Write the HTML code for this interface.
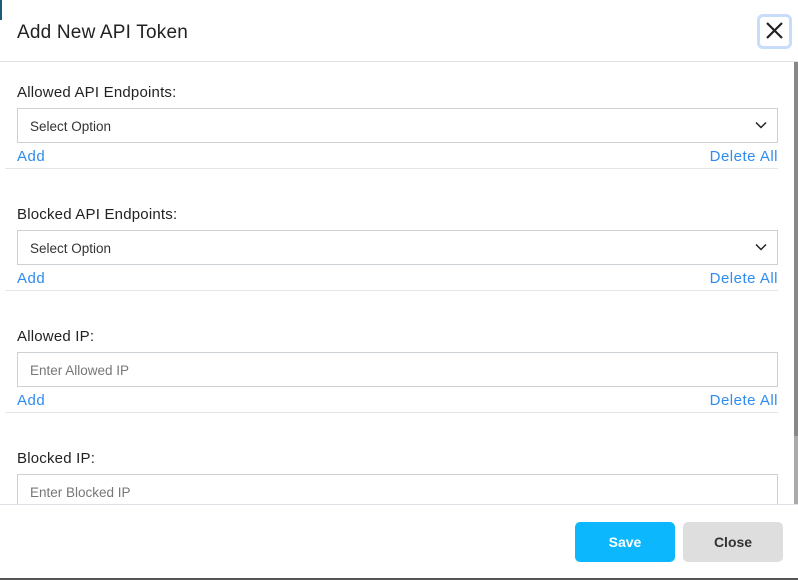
<!DOCTYPE html>
<html><head><style>
*{box-sizing:border-box;margin:0;padding:0}
body{width:798px;height:580px;overflow:hidden;background:#fff;font-family:"Liberation Sans",sans-serif;position:relative}
.hdr{position:absolute;left:0;top:0;width:798px;height:62px;border-bottom:1px solid #dde1e6}
.hdr h1{position:absolute;left:17px;top:22px;font-size:19px;font-weight:normal;color:#222;letter-spacing:0.2px}
.x{position:absolute;left:757px;top:14px;width:35px;height:35px;border:3px solid #c8dcfb;border-radius:6px}
.lbl{position:absolute;left:17px;font-size:15px;color:#222;letter-spacing:0.2px}
.inp{position:absolute;left:17px;width:761px;height:35px;border:1px solid #ccd1d6;font-size:13.5px;padding:10px 12px;color:#333}
.ph{color:#777}
.lnk{position:absolute;font-size:15px;color:#2e8cf0;letter-spacing:0.5px}
.sep{position:absolute;left:5px;width:773px;height:1px;background:#e3e5e8}
.foot{position:absolute;left:0;top:504px;width:798px;height:76px;border-top:1px solid #dde1e6;background:#fff}
.btn{position:absolute;top:522px;height:40px;border-radius:5px;font-weight:bold;font-size:14px;text-align:center;line-height:40px}
</style></head><body>
<div style="position:absolute;left:0;top:0;width:2px;height:20px;background:#1a5c7a"></div>
<div class="hdr"><h1>Add New API Token</h1>
<div class="x"><svg width="29" height="29" viewBox="0 0 29 29"><path d="M7 6L22 21M22 6L7 21" stroke="#222" stroke-width="2.2"/></svg></div></div>

<div class="lbl" style="top:84px">Allowed API Endpoints:</div>
<div class="inp" style="top:108px">Select Option<svg style="position:absolute;right:10px;top:12px" width="12" height="8"><path d="M1 1.5L6 6.5L11 1.5" stroke="#222" stroke-width="1.5" fill="none"/></svg></div>
<div class="lnk" style="left:17px;top:148px">Add</div><div class="lnk" style="right:20px;top:148px">Delete All</div>
<div class="sep" style="top:168px"></div>

<div class="lbl" style="top:206px">Blocked API Endpoints:</div>
<div class="inp" style="top:230px">Select Option<svg style="position:absolute;right:10px;top:12px" width="12" height="8"><path d="M1 1.5L6 6.5L11 1.5" stroke="#222" stroke-width="1.5" fill="none"/></svg></div>
<div class="lnk" style="left:17px;top:270px">Add</div><div class="lnk" style="right:20px;top:270px">Delete All</div>
<div class="sep" style="top:290px"></div>

<div class="lbl" style="top:328px">Allowed IP:</div>
<div class="inp" style="top:352px"><span class="ph">Enter Allowed IP</span></div>
<div class="lnk" style="left:17px;top:392px">Add</div><div class="lnk" style="right:20px;top:392px">Delete All</div>
<div class="sep" style="top:412px"></div>

<div class="lbl" style="top:450px">Blocked IP:</div>
<div class="inp" style="top:474px;height:40px"><span class="ph">Enter Blocked IP</span></div>

<div style="position:absolute;left:794px;top:62px;width:4px;height:374px;background:#888"></div>
<div style="position:absolute;left:794px;top:436px;width:4px;height:68px;background:#aaa"></div>

<div class="foot"></div>
<div class="btn" style="left:575px;width:100px;background:#0db7fd;color:#fff">Save</div>
<div class="btn" style="left:683px;width:100px;background:#dedede;color:#333">Close</div>
<div style="position:absolute;left:0;top:578px;width:798px;height:2px;background:#555"></div>
</body></html>
